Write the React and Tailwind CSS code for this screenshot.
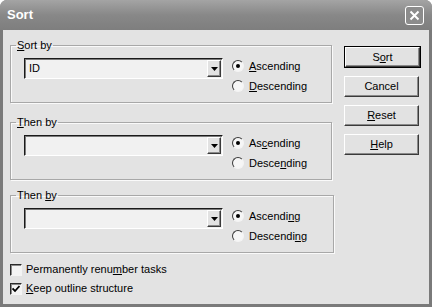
import React from 'react';

const font = { fontFamily: '"Liberation Sans", Arial, sans-serif' };

// letter at index `at` is underlined (mnemonic)
const Label = ({ text, at }) => (
  <span>
    {text.slice(0, at)}
    <span className="underline underline-offset-[1px]">{text[at]}</span>
    {text.slice(at + 1)}
  </span>
);

const Radio = ({ checked, label }) => (
  <div className="flex items-center h-[20px] gap-[5px]">
    <div className="w-[12px] h-[12px] rounded-full border-[1.5px] border-t-[#3a3a3a] border-l-[#3a3a3a] border-r-[#f4f4f4] border-b-[#f4f4f4] bg-[#f6f6f6] flex items-center justify-center">
      {checked && <div className="w-[4px] h-[4px] rounded-full bg-black" />}
    </div>
    <span className="text-[11px] text-black">{label}</span>
  </div>
);

const Combo = ({ value }) => (
  <div className="w-[199px] h-[21px] flex border border-t-[#1a1a1a] border-l-[#1a1a1a] border-r-white border-b-white shadow-[inset_1px_1px_0_#7a7a7a] bg-[#f1f1f1]">
    <div className="flex-1 flex items-center pl-[4px] text-[11px] text-black">{value}</div>
    <div className="w-[14px] m-[1px] ml-0 flex items-center justify-center bg-[#e2e2e2] border border-t-white border-l-white border-r-[#3a3a3a] border-b-[#3a3a3a] shadow-[inset_-1px_-1px_0_#8a8a8a]">
      <svg width="7" height="4" viewBox="0 0 7 4">
        <path d="M0 0h7L3.5 4z" fill="#000" />
      </svg>
    </div>
  </div>
);

const Group = ({ legend, value, asc, desc, wide }) => (
  <fieldset className={`${wide ? 'w-[324px]' : 'w-[322px]'} h-[65px] border border-[#a8a8a8] shadow-[1px_1px_0_#fafafa,inset_1px_1px_0_#fafafa] p-0 m-0`}>
    <legend className="ml-[5px] px-[1px] text-[11px] leading-[14px] text-black">{legend}</legend>
    <div className="flex items-start pl-[13px]">
      <div className="mt-[6px]">
        <Combo value={value} />
      </div>
      <div className="ml-[9px] mt-[4px]">
        <Radio checked label={asc} />
        <Radio label={desc} />
      </div>
    </div>
  </fieldset>
);

const Check = ({ checked, label }) => (
  <div className="flex items-center h-[19px] gap-[4px]">
    <div className="w-[12px] h-[12px] border border-t-[#2a2a2a] border-l-[#2a2a2a] border-r-[#f4f4f4] border-b-[#f4f4f4] shadow-[inset_1px_1px_0_#8a8a8a] bg-[#f4f4f4] flex items-center justify-center">
      {checked && (
        <svg width="8" height="8" viewBox="0 0 8 8">
          <path d="M0.5 3.5L3 6L7.5 1" stroke="#000" strokeWidth="1.8" fill="none" />
        </svg>
      )}
    </div>
    <span className="text-[11px] text-black">{label}</span>
  </div>
);

const Btn = ({ children }) => (
  <button className="w-[75px] h-[21px] text-[11px] text-black bg-[#e2e2e2] border border-t-white border-l-white border-r-[#3a3a3a] border-b-[#3a3a3a] shadow-[inset_-1px_-1px_0_#8a8a8a]">
    {children}
  </button>
);

export default function App() {
  return (
    <div className="w-[432px] h-[307px] bg-white" style={font}>
      <div className="w-full h-full flex flex-col bg-[#7a7a7a] rounded-t-[7px] overflow-hidden">
        {/* title bar */}
        <div className="h-[30px] flex items-center justify-between pl-[7px] pr-[8px] bg-linear-to-b from-[#a4a4a4] via-[#888888] to-[#7e7e7e]">
          <span className="text-white font-bold text-[13px] pb-[1px]">Sort</span>
          <div className="w-[19px] h-[19px] rounded-[3px] border border-white bg-[#8c8c8c] flex items-center justify-center">
            <svg width="11" height="11" viewBox="0 0 11 11">
              <path d="M1.5 1.5l8 8M9.5 1.5l-8 8" stroke="#fff" strokeWidth="2" />
            </svg>
          </div>
        </div>

        {/* body */}
        <div className="flex-1 mx-[3px] mb-[3px] bg-[#e3e3e3] flex pl-[7px] pt-[8px]">
          <div className="w-[324px]">
            <Group legend={<Label text="Sort by" at={0} />} value="ID"
              asc={<Label text="Ascending" at={0} />} desc={<Label text="Descending" at={0} />} />
            <div className="mt-[12px]">
              <Group legend={<Label text="Then by" at={0} />} value=""
                asc={<Label text="Ascending" at={2} />} desc={<Label text="Descending" at={5} />} />
            </div>
            <div className="mt-[8px]">
              <Group wide legend={<Label text="Then by" at={5} />} value=""
                asc={<Label text="Ascending" at={7} />} desc={<Label text="Descending" at={8} />} />
            </div>
            <div className="mt-[7px]">
              <Check label={<Label text="Permanently renumber tasks" at={16} />} />
              <Check checked label={<Label text="Keep outline structure" at={0} />} />
            </div>
          </div>

          {/* buttons */}
          <div className="ml-[10px] pt-[8px] flex flex-col gap-[8px]">
            <div className="border border-black w-[77px] h-[22px] flex">
              <button className="flex-1 text-[11px] text-black bg-[#e2e2e2] border border-t-white border-l-white border-r-[#3a3a3a] border-b-[#3a3a3a] shadow-[inset_-1px_-1px_0_#8a8a8a]">
                <Label text="Sort" at={1} />
              </button>
            </div>
            <Btn>Cancel</Btn>
            <Btn><Label text="Reset" at={0} /></Btn>
            <Btn><Label text="Help" at={0} /></Btn>
          </div>
        </div>
      </div>
    </div>
  );
}
